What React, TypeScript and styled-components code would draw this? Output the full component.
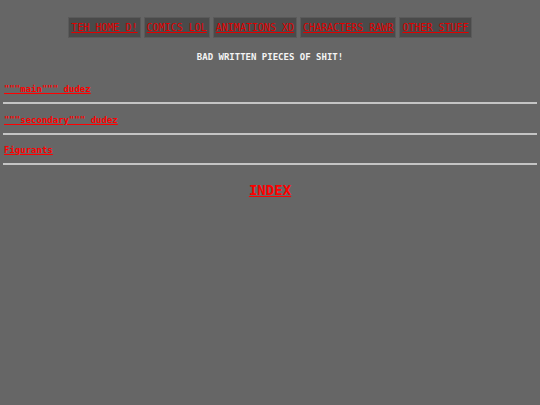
import React from "react";
import styled, { createGlobalStyle } from "styled-components";

const Global = createGlobalStyle`
  html, body { margin: 0; padding: 0; background: #666666; }
  body { font-family: "DejaVu Sans Mono", "Liberation Mono", monospace; }
`;

const Page = styled.div`
  display: flex;
  flex-direction: column;
  padding: 17px 3px 0;
`;

const Nav = styled.nav`
  display: flex;
  justify-content: center;
  gap: 3px;
`;

const NavButton = styled.a`
  display: block;
  background: #4a4a4a;
  border: 1px solid #5a5a5a;
  padding: 2px 2px;
  line-height: 15px;
  font-size: 10px;
  color: #e00000;
  text-decoration: underline;
  white-space: nowrap;
`;

const Title = styled.h1`
  margin: 13px 0 0;
  text-align: center;
  color: #f4f4f4;
  font-size: 9px;
  font-weight: bold;
  line-height: 13px;
`;

const Section = styled.div<{ top: number }>`
  display: flex;
  flex-direction: column;
  margin-top: ${(p) => p.top}px;
`;

const SectionLink = styled.a`
  color: #ff0000;
  font-size: 9px;
  font-weight: bold;
  line-height: 13px;
  text-decoration: underline;
  padding-left: 1px;
  align-self: flex-start;
`;

const Rule = styled.hr`
  margin: 6px 0 0;
  border: none;
  height: 2px;
  background: #c4c4c4;
`;

const Index = styled.a`
  align-self: center;
  margin-top: 16px;
  color: #ff0000;
  font-size: 14px;
  font-weight: bold;
  line-height: 18px;
  text-decoration: underline;
`;

const navItems = ["TEH HOME D!", "COMICS LOL", "ANIMATIONS XD", "CHARACTERS RAWR", "OTHER STUFF"];
const sections = [
  { label: '"""main""" dudez', top: 19 },
  { label: '"""secondary""" dudez', top: 10 },
  { label: "Figurants", top: 9 },
];

export default function App() {
  return (
    <>
      <Global />
      <Page>
        <Nav>
          {navItems.map((n) => (
            <NavButton key={n} href="#">{n}</NavButton>
          ))}
        </Nav>
        <Title>BAD WRITTEN PIECES OF SHIT!</Title>
        {sections.map((s) => (
          <Section key={s.label} top={s.top}>
            <SectionLink href="#">{s.label}</SectionLink>
            <Rule />
          </Section>
        ))}
        <Index href="#">INDEX</Index>
      </Page>
    </>
  );
}
